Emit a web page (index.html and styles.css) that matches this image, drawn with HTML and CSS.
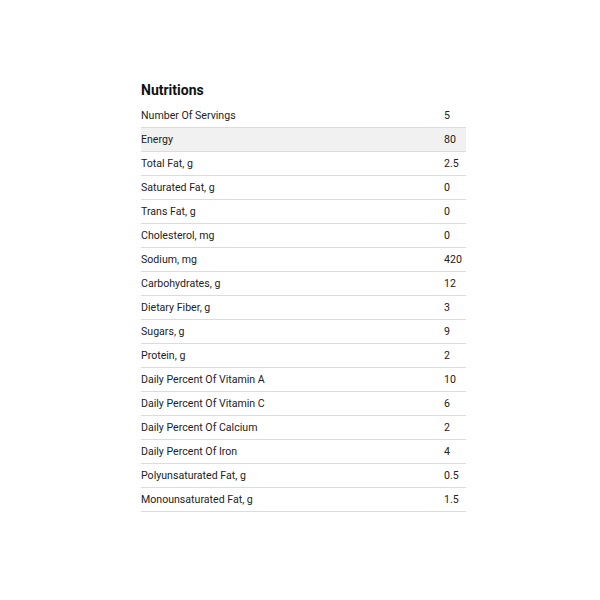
FILE: index.html
```html
<!DOCTYPE html>
<html>
<head>
<meta charset="utf-8">
<link rel="stylesheet" href="styles.css">
</head>
<body>
<div class="panel">
  <h2 class="title">Nutritions</h2>
  <div class="table">
    <div class="row"><span class="label">Number Of Servings</span><span class="value">5</span></div>
    <div class="row shaded"><span class="label">Energy</span><span class="value">80</span></div>
    <div class="row"><span class="label">Total Fat, g</span><span class="value">2.5</span></div>
    <div class="row"><span class="label">Saturated Fat, g</span><span class="value">0</span></div>
    <div class="row"><span class="label">Trans Fat, g</span><span class="value">0</span></div>
    <div class="row"><span class="label">Cholesterol, mg</span><span class="value">0</span></div>
    <div class="row"><span class="label">Sodium, mg</span><span class="value">420</span></div>
    <div class="row"><span class="label">Carbohydrates, g</span><span class="value">12</span></div>
    <div class="row"><span class="label">Dietary Fiber, g</span><span class="value">3</span></div>
    <div class="row"><span class="label">Sugars, g</span><span class="value">9</span></div>
    <div class="row"><span class="label">Protein, g</span><span class="value">2</span></div>
    <div class="row"><span class="label">Daily Percent Of Vitamin A</span><span class="value">10</span></div>
    <div class="row"><span class="label">Daily Percent Of Vitamin C</span><span class="value">6</span></div>
    <div class="row"><span class="label">Daily Percent Of Calcium</span><span class="value">2</span></div>
    <div class="row"><span class="label">Daily Percent Of Iron</span><span class="value">4</span></div>
    <div class="row"><span class="label">Polyunsaturated Fat, g</span><span class="value">0.5</span></div>
    <div class="row"><span class="label">Monounsaturated Fat, g</span><span class="value">1.5</span></div>
  </div>
</div>
</body>
</html>
```
FILE: styles.css
```css
html, body {
  margin: 0;
  padding: 0;
  background: #ffffff;
}
body {
  font-family: Roboto, "Liberation Sans", sans-serif;
  color: #222222;
}
.panel {
  width: 325px;
  margin: 81px 0 0 141px;
}
.title {
  margin: 0 0 4px 0;
  font-size: 14px;
  line-height: 19px;
  font-weight: 700;
  color: #111111;
}
.table {
  display: flex;
  flex-direction: column;
}
.row {
  display: flex;
  align-items: center;
  height: 23px;
  border-bottom: 1px solid #dcdcdc;
  font-size: 10.6px;
}
.row.shaded {
  background: #f1f1f1;
}
.label {
  flex: 1;
}
.value {
  width: 22px;
}
```
